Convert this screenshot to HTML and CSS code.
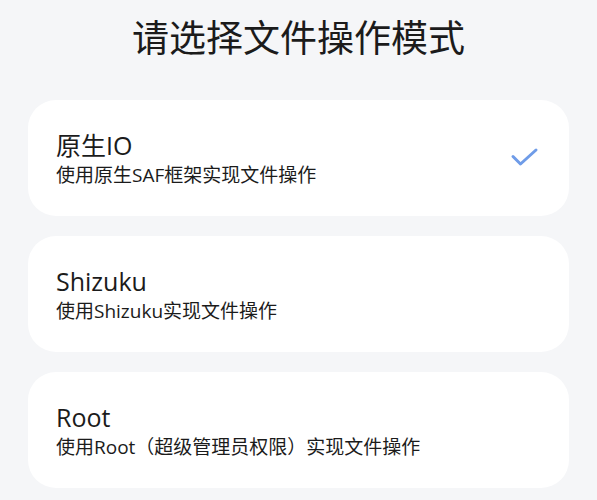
FILE: index.html
```html
<!DOCTYPE html>
<html>
<head>
  <meta charset="utf-8">
  <title>文件操作模式</title>
  <link rel="stylesheet" href="styles.css">
</head>
<body>
  <h1 class="page-title">请选择文件操作模式</h1>

  <div class="mode-list">
    <div class="mode-card">
      <div class="mode-text">
        <div class="mode-name">原生IO</div>
        <div class="mode-desc">使用原生SAF框架实现文件操作</div>
      </div>
      <svg class="check" width="30" height="22" viewBox="0 0 30 22">
        <path d="M3 9.5 L10.5 17 L26 3" fill="none" stroke="#6f9ce8" stroke-width="3" stroke-linecap="round" stroke-linejoin="round"/>
      </svg>
    </div>

    <div class="mode-card">
      <div class="mode-text">
        <div class="mode-name">Shizuku</div>
        <div class="mode-desc">使用Shizuku实现文件操作</div>
      </div>
    </div>

    <div class="mode-card">
      <div class="mode-text">
        <div class="mode-name">Root</div>
        <div class="mode-desc">使用Root（超级管理员权限）实现文件操作</div>
      </div>
    </div>
  </div>
</body>
</html>
```

FILE: styles.css
```css
body {
  margin: 0;
  background-color: #f5f6f8;
  font-family: "Open Sans", "Noto Sans CJK SC", sans-serif;
  color: #1b1b1b;
}

.page-title {
  margin: 0;
  height: 100px;
  box-sizing: border-box;
  padding-top: 12px;
  font-family: "Noto Sans CJK SC", sans-serif;
  font-size: 37px;
  line-height: 48px;
  font-weight: 400;
  text-align: center;
}

.mode-list {
  display: flex;
  flex-direction: column;
  gap: 20px;
  margin: 0 28px;
}

.mode-card {
  display: flex;
  align-items: center;
  justify-content: space-between;
  height: 116px;
  padding: 0 28px;
  background-color: #fff;
  border-radius: 28px;
}

.mode-name {
  font-size: 25px;
  line-height: 32px;
}

.mode-desc {
  font-size: 19px;
  line-height: 24px;
  margin-top: 2px;
}

.check {
  display: block;
  margin-right: 1px;
}
```
